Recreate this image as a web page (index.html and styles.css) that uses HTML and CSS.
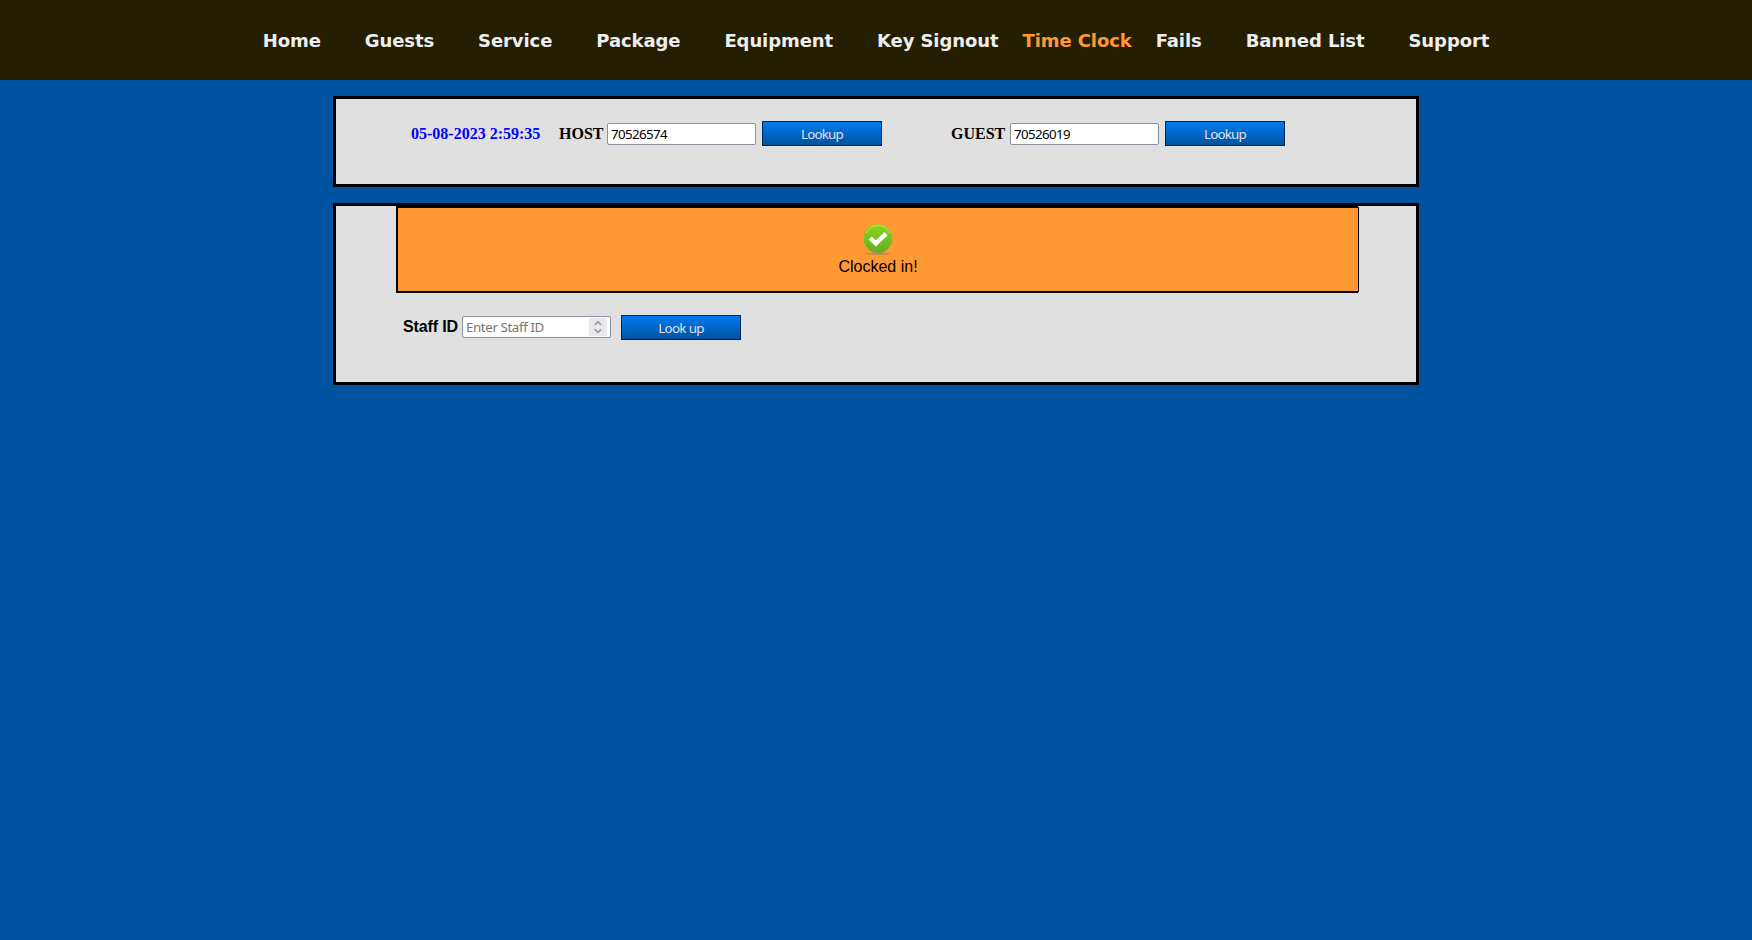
FILE: index.html
```
<!DOCTYPE html>
<html lang="en">
<head>
<meta charset="utf-8">
<title>Time Clock</title>
<link rel="stylesheet" href="styles.css">
</head>
<body>
<nav class="nav">
  <a>Home</a><a>Guests</a><a>Service</a><a>Package</a><a>Equipment</a><a>Key Signout</a><a class="active">Time Clock</a><a>Fails</a><a>Banned List</a><a>Support</a>
</nav>
<main>
  <section class="panel lookup">
    <span class="stamp">05-08-2023 2:59:35</span>
    <label class="host">HOST</label>
    <div class="field">70526574</div>
    <div class="btn">Lookup</div>
    <label class="guest">GUEST</label>
    <div class="field">70526019</div>
    <div class="btn">Lookup</div>
  </section>
  <section class="panel clock">
    <div class="notice-frame">
      <div class="notice">
        <svg class="check" width="30" height="32" viewBox="0 0 30 32">
          <defs><linearGradient id="g" x1="0" y1="0" x2="0" y2="1"><stop offset="0" stop-color="#8fd61c"/><stop offset="1" stop-color="#61ad28"/></linearGradient></defs>
          <ellipse cx="15" cy="29.6" rx="13.5" ry="1.2" fill="#9b8b68" opacity=".75"/>
          <circle cx="15" cy="14.6" r="14.4" fill="url(#g)"/>
          <path d="M3.2 9.1A13 13 0 0 1 26.8 9.1" fill="none" stroke="#b9e75c" stroke-width="1"/>
          <path d="M7.2 14.2L12.9 19.4L23 9.6" fill="none" stroke="#fff" stroke-width="4.4"/>
        </svg>
        <span>Clocked in!</span>
      </div>
    </div>
    <div class="staff">
      <label>Staff ID</label>
      <div class="field number"><span>Enter Staff ID</span>
        <svg class="spin" width="18" height="18" viewBox="0 0 18 18"><path d="M5.8 6.8L9 3.8L12.2 6.8M5.8 11.4L9 14.4L12.2 11.4" fill="none" stroke="#9a98a6" stroke-width="1.6"/></svg>
      </div>
      <div class="btn">Look up</div>
    </div>
  </section>
</main>
</body>
</html>
```
FILE: styles.css
```
* { box-sizing: border-box; }
body { margin: 0; background: #0053a0; color: #000; font-family: "Liberation Sans", Arial, sans-serif; }
.nav { height: 80px; padding-top: 2px; background: #241f03; display: flex; justify-content: center; align-items: center; font: bold 18px/22px "DejaVu Sans", Verdana, sans-serif; letter-spacing: -.09px; color: #eee; white-space: nowrap; }
.nav a { padding: 0 22px; }
.nav .active { padding: 0 2px; color: #ff9933; }
main { width: 1086px; margin: 16px 0 0 333px; }
.panel { border: 3px solid #000; background: #e0e0e0; }
.lookup { height: 91px; padding: 22px 0 0 75px; display: flex; align-items: flex-start; font: bold 16px/26px "Liberation Serif", "Times New Roman", serif; white-space: nowrap; }
.stamp { width: 148px; color: #0000ff; }
.host { width: 48px; }
.guest { width: 59px; margin-left: 69px; }
.field { width: 149px; height: 22px; margin-top: 2px; padding: 0 0 0 3px; border: 1px solid #8f8f9d; border-radius: 2px; background: #fff; font: 13.33px/20px "Noto Sans", sans-serif; letter-spacing: -.63px; }
.btn { width: 120px; height: 25px; margin-left: 6px; border: 1px solid #00284f; background: linear-gradient(#007bf0, #0053a0); color: #e0e0e0; text-align: center; font: 13.33px/25px "Noto Sans", sans-serif; letter-spacing: -.8px; }
.clock { height: 182px; margin-top: 16px; }
.notice-frame { width: 962px; height: 87px; margin-left: 60px; border-top: 2px solid #000; border-bottom: 2px solid #000; border-left: 2px solid #000; }
.notice { width: 961px; height: 85px; margin-top: -1px; padding-top: 17px; border-right: 1px solid #000; background: #ff9933; background-clip: padding-box; display: flex; flex-direction: column; align-items: center; font-size: 16px; line-height: 19px; box-shadow: inset 0 1px #000, inset 0 -1px #000; }
.check { display: block; margin: 0 1px 1px 0; }
.staff { display: flex; margin: 22px 0 0 67px; white-space: nowrap; }
.staff label { width: 59px; font: bold 16px/23px "Liberation Sans", Arial, sans-serif; letter-spacing: -.12px; }
.staff .field { margin-top: 1px; }
.number { display: flex; justify-content: space-between; color: #757575; letter-spacing: -.4px; }
.spin { margin: 1px 3px 0 0; background: #e9e9ed; }
.staff .btn { margin-left: 10px; letter-spacing: -.65px; }
```
